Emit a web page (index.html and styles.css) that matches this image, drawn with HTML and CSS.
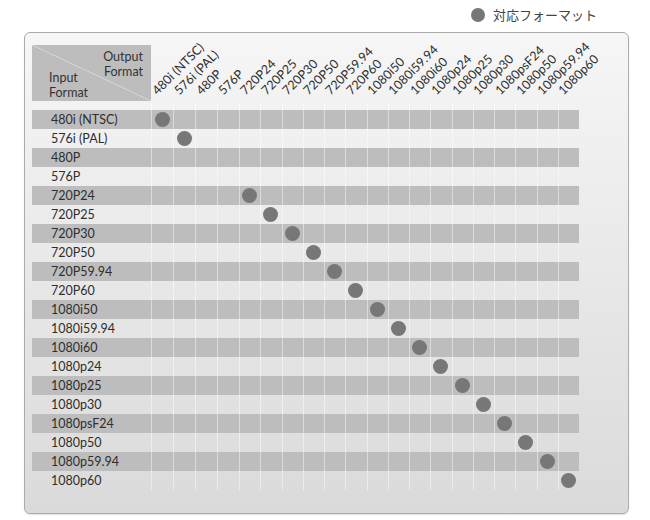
FILE: index.html
```html
<!DOCTYPE html>
<html lang="ja">
<head>
<meta charset="utf-8">
<title>対応フォーマット</title>
<link rel="stylesheet" href="styles.css">
</head>
<body>
<div class="legend"><span class="legend-dot"></span><span class="legend-text">対応フォーマット</span></div>
<div class="panel">
<table class="grid">
<colgroup>
<col class="c-label"><col class="c-wide"><col class="c-wide"><col class="c-wide"><col class="c-wide">
<col class="c-n"><col class="c-n"><col class="c-n"><col class="c-n"><col class="c-n"><col class="c-n"><col class="c-n"><col class="c-n">
<col class="c-n"><col class="c-n"><col class="c-n"><col class="c-n"><col class="c-n"><col class="c-n"><col class="c-n"><col class="c-n">
</colgroup>
<thead>
<tr class="head">
<th class="corner"><div class="corner-out">Output<br>Format</div><div class="corner-in">Input<br>Format</div></th>
<th class="h"><span>480i (NTSC)</span></th>
<th class="h"><span>576i (PAL)</span></th>
<th class="h"><span>480P</span></th>
<th class="h"><span>576P</span></th>
<th class="h"><span>720P24</span></th>
<th class="h"><span>720P25</span></th>
<th class="h"><span>720P30</span></th>
<th class="h"><span>720P50</span></th>
<th class="h"><span>720P59.94</span></th>
<th class="h"><span>720P60</span></th>
<th class="h"><span>1080i50</span></th>
<th class="h"><span>1080i59.94</span></th>
<th class="h"><span>1080i60</span></th>
<th class="h"><span>1080p24</span></th>
<th class="h"><span>1080p25</span></th>
<th class="h"><span>1080p30</span></th>
<th class="h"><span>1080psF24</span></th>
<th class="h"><span>1080p50</span></th>
<th class="h"><span>1080p59.94</span></th>
<th class="h"><span>1080p60</span></th>
</tr>
<tr class="spacer"><td></td><td class="c"></td><td class="c"></td><td class="c"></td><td class="c"></td><td class="c"></td><td class="c"></td><td class="c"></td><td class="c"></td><td class="c"></td><td class="c"></td><td class="c"></td><td class="c"></td><td class="c"></td><td class="c"></td><td class="c"></td><td class="c"></td><td class="c"></td><td class="c"></td><td class="c"></td><td class="c"></td></tr>
</thead>
<tbody>
<tr class="odd"><th class="lbl">480i (NTSC)</th><td class="c"><span class="dot"></span></td><td class="c"></td><td class="c"></td><td class="c"></td><td class="c"></td><td class="c"></td><td class="c"></td><td class="c"></td><td class="c"></td><td class="c"></td><td class="c"></td><td class="c"></td><td class="c"></td><td class="c"></td><td class="c"></td><td class="c"></td><td class="c"></td><td class="c"></td><td class="c"></td><td class="c"></td></tr>
<tr><th class="lbl">576i (PAL)</th><td class="c"></td><td class="c"><span class="dot"></span></td><td class="c"></td><td class="c"></td><td class="c"></td><td class="c"></td><td class="c"></td><td class="c"></td><td class="c"></td><td class="c"></td><td class="c"></td><td class="c"></td><td class="c"></td><td class="c"></td><td class="c"></td><td class="c"></td><td class="c"></td><td class="c"></td><td class="c"></td><td class="c"></td></tr>
<tr class="odd"><th class="lbl">480P</th><td class="c"></td><td class="c"></td><td class="c"></td><td class="c"></td><td class="c"></td><td class="c"></td><td class="c"></td><td class="c"></td><td class="c"></td><td class="c"></td><td class="c"></td><td class="c"></td><td class="c"></td><td class="c"></td><td class="c"></td><td class="c"></td><td class="c"></td><td class="c"></td><td class="c"></td><td class="c"></td></tr>
<tr><th class="lbl">576P</th><td class="c"></td><td class="c"></td><td class="c"></td><td class="c"></td><td class="c"></td><td class="c"></td><td class="c"></td><td class="c"></td><td class="c"></td><td class="c"></td><td class="c"></td><td class="c"></td><td class="c"></td><td class="c"></td><td class="c"></td><td class="c"></td><td class="c"></td><td class="c"></td><td class="c"></td><td class="c"></td></tr>
<tr class="odd"><th class="lbl">720P24</th><td class="c"></td><td class="c"></td><td class="c"></td><td class="c"></td><td class="c"><span class="dot"></span></td><td class="c"></td><td class="c"></td><td class="c"></td><td class="c"></td><td class="c"></td><td class="c"></td><td class="c"></td><td class="c"></td><td class="c"></td><td class="c"></td><td class="c"></td><td class="c"></td><td class="c"></td><td class="c"></td><td class="c"></td></tr>
<tr><th class="lbl">720P25</th><td class="c"></td><td class="c"></td><td class="c"></td><td class="c"></td><td class="c"></td><td class="c"><span class="dot"></span></td><td class="c"></td><td class="c"></td><td class="c"></td><td class="c"></td><td class="c"></td><td class="c"></td><td class="c"></td><td class="c"></td><td class="c"></td><td class="c"></td><td class="c"></td><td class="c"></td><td class="c"></td><td class="c"></td></tr>
<tr class="odd"><th class="lbl">720P30</th><td class="c"></td><td class="c"></td><td class="c"></td><td class="c"></td><td class="c"></td><td class="c"></td><td class="c"><span class="dot"></span></td><td class="c"></td><td class="c"></td><td class="c"></td><td class="c"></td><td class="c"></td><td class="c"></td><td class="c"></td><td class="c"></td><td class="c"></td><td class="c"></td><td class="c"></td><td class="c"></td><td class="c"></td></tr>
<tr><th class="lbl">720P50</th><td class="c"></td><td class="c"></td><td class="c"></td><td class="c"></td><td class="c"></td><td class="c"></td><td class="c"></td><td class="c"><span class="dot"></span></td><td class="c"></td><td class="c"></td><td class="c"></td><td class="c"></td><td class="c"></td><td class="c"></td><td class="c"></td><td class="c"></td><td class="c"></td><td class="c"></td><td class="c"></td><td class="c"></td></tr>
<tr class="odd"><th class="lbl">720P59.94</th><td class="c"></td><td class="c"></td><td class="c"></td><td class="c"></td><td class="c"></td><td class="c"></td><td class="c"></td><td class="c"></td><td class="c"><span class="dot"></span></td><td class="c"></td><td class="c"></td><td class="c"></td><td class="c"></td><td class="c"></td><td class="c"></td><td class="c"></td><td class="c"></td><td class="c"></td><td class="c"></td><td class="c"></td></tr>
<tr><th class="lbl">720P60</th><td class="c"></td><td class="c"></td><td class="c"></td><td class="c"></td><td class="c"></td><td class="c"></td><td class="c"></td><td class="c"></td><td class="c"></td><td class="c"><span class="dot"></span></td><td class="c"></td><td class="c"></td><td class="c"></td><td class="c"></td><td class="c"></td><td class="c"></td><td class="c"></td><td class="c"></td><td class="c"></td><td class="c"></td></tr>
<tr class="odd"><th class="lbl">1080i50</th><td class="c"></td><td class="c"></td><td class="c"></td><td class="c"></td><td class="c"></td><td class="c"></td><td class="c"></td><td class="c"></td><td class="c"></td><td class="c"></td><td class="c"><span class="dot"></span></td><td class="c"></td><td class="c"></td><td class="c"></td><td class="c"></td><td class="c"></td><td class="c"></td><td class="c"></td><td class="c"></td><td class="c"></td></tr>
<tr><th class="lbl">1080i59.94</th><td class="c"></td><td class="c"></td><td class="c"></td><td class="c"></td><td class="c"></td><td class="c"></td><td class="c"></td><td class="c"></td><td class="c"></td><td class="c"></td><td class="c"></td><td class="c"><span class="dot"></span></td><td class="c"></td><td class="c"></td><td class="c"></td><td class="c"></td><td class="c"></td><td class="c"></td><td class="c"></td><td class="c"></td></tr>
<tr class="odd"><th class="lbl">1080i60</th><td class="c"></td><td class="c"></td><td class="c"></td><td class="c"></td><td class="c"></td><td class="c"></td><td class="c"></td><td class="c"></td><td class="c"></td><td class="c"></td><td class="c"></td><td class="c"></td><td class="c"><span class="dot"></span></td><td class="c"></td><td class="c"></td><td class="c"></td><td class="c"></td><td class="c"></td><td class="c"></td><td class="c"></td></tr>
<tr><th class="lbl">1080p24</th><td class="c"></td><td class="c"></td><td class="c"></td><td class="c"></td><td class="c"></td><td class="c"></td><td class="c"></td><td class="c"></td><td class="c"></td><td class="c"></td><td class="c"></td><td class="c"></td><td class="c"></td><td class="c"><span class="dot"></span></td><td class="c"></td><td class="c"></td><td class="c"></td><td class="c"></td><td class="c"></td><td class="c"></td></tr>
<tr class="odd"><th class="lbl">1080p25</th><td class="c"></td><td class="c"></td><td class="c"></td><td class="c"></td><td class="c"></td><td class="c"></td><td class="c"></td><td class="c"></td><td class="c"></td><td class="c"></td><td class="c"></td><td class="c"></td><td class="c"></td><td class="c"></td><td class="c"><span class="dot"></span></td><td class="c"></td><td class="c"></td><td class="c"></td><td class="c"></td><td class="c"></td></tr>
<tr><th class="lbl">1080p30</th><td class="c"></td><td class="c"></td><td class="c"></td><td class="c"></td><td class="c"></td><td class="c"></td><td class="c"></td><td class="c"></td><td class="c"></td><td class="c"></td><td class="c"></td><td class="c"></td><td class="c"></td><td class="c"></td><td class="c"></td><td class="c"><span class="dot"></span></td><td class="c"></td><td class="c"></td><td class="c"></td><td class="c"></td></tr>
<tr class="odd"><th class="lbl">1080psF24</th><td class="c"></td><td class="c"></td><td class="c"></td><td class="c"></td><td class="c"></td><td class="c"></td><td class="c"></td><td class="c"></td><td class="c"></td><td class="c"></td><td class="c"></td><td class="c"></td><td class="c"></td><td class="c"></td><td class="c"></td><td class="c"></td><td class="c"><span class="dot"></span></td><td class="c"></td><td class="c"></td><td class="c"></td></tr>
<tr><th class="lbl">1080p50</th><td class="c"></td><td class="c"></td><td class="c"></td><td class="c"></td><td class="c"></td><td class="c"></td><td class="c"></td><td class="c"></td><td class="c"></td><td class="c"></td><td class="c"></td><td class="c"></td><td class="c"></td><td class="c"></td><td class="c"></td><td class="c"></td><td class="c"></td><td class="c"><span class="dot"></span></td><td class="c"></td><td class="c"></td></tr>
<tr class="odd"><th class="lbl">1080p59.94</th><td class="c"></td><td class="c"></td><td class="c"></td><td class="c"></td><td class="c"></td><td class="c"></td><td class="c"></td><td class="c"></td><td class="c"></td><td class="c"></td><td class="c"></td><td class="c"></td><td class="c"></td><td class="c"></td><td class="c"></td><td class="c"></td><td class="c"></td><td class="c"></td><td class="c"><span class="dot"></span></td><td class="c"></td></tr>
<tr><th class="lbl">1080p60</th><td class="c"></td><td class="c"></td><td class="c"></td><td class="c"></td><td class="c"></td><td class="c"></td><td class="c"></td><td class="c"></td><td class="c"></td><td class="c"></td><td class="c"></td><td class="c"></td><td class="c"></td><td class="c"></td><td class="c"></td><td class="c"></td><td class="c"></td><td class="c"></td><td class="c"></td><td class="c"><span class="dot"></span></td></tr>
</tbody>
</table>
</div>
</body>
</html>
```

FILE: styles.css
```css
html, body {
  margin: 0;
  padding: 0;
  background: #ffffff;
}
body {
  width: 650px;
  height: 520px;
  overflow: hidden;
  font-family: Lato, "Open Sans", "Noto Sans CJK JP", sans-serif;
  color: #333333;
}
.legend {
  height: 30px;
  display: flex;
  align-items: center;
  justify-content: flex-end;
  padding-right: 53px;
}
.legend-dot {
  width: 14px;
  height: 14px;
  border-radius: 50%;
  background: #777777;
  margin-right: 8px;
}
.legend-text {
  font-family: "Noto Sans CJK JP", sans-serif;
  font-size: 13px;
  line-height: 16px;
  color: #444444;
}
.panel {
  box-sizing: border-box;
  margin: 2px 0 0 24px;
  width: 605px;
  height: 482px;
  border: 1px solid #ababab;
  border-radius: 6px;
  background: linear-gradient(#f6f6f6, #dadada);
  box-shadow: 0 1px 1px rgba(0, 0, 0, 0.12);
  padding: 12px 0 0 7px;
}
.grid {
  table-layout: fixed;
  border-collapse: collapse;
  border-spacing: 0;
  width: 547px;
}
.c-label { width: 119px; }
.c-wide { width: 22px; }
.c-n { width: 21.25px; }
.grid th, .grid td {
  padding: 0;
  margin: 0;
}
.head th {
  height: 56px;
}
.corner {
  background: #bdbdbd linear-gradient(to top right, transparent calc(50% - 0.6px), #e2e2e2 50%, transparent calc(50% + 0.6px));
  font-weight: normal;
  font-size: 12.5px;
  line-height: 15px;
  color: #333333;
  vertical-align: top;
  position: relative;
}
.corner-out {
  position: absolute;
  top: 4px;
  right: 8px;
  text-align: right;
}
.corner-in {
  position: absolute;
  bottom: 1px;
  left: 17px;
  text-align: left;
}
.h {
  position: relative;
  font-weight: normal;
}
.h span {
  position: absolute;
  left: calc(50% - 3px);
  bottom: 4px;
  font-size: 12.5px;
  line-height: 12px;
  white-space: nowrap;
  transform-origin: left bottom;
  transform: rotate(-45deg);
  color: #2e2e2e;
}
.spacer td {
  height: 9px;
}
.spacer .c {
  box-shadow: none;
  background: linear-gradient(to right, rgba(255, 255, 255, 0.5) 1px, transparent 1px) 0 3px / 100% 6px no-repeat;
}
tbody tr {
  height: 19px;
}
tbody tr.odd {
  background: #bdbdbd;
}
.lbl {
  text-align: left;
  font-weight: normal;
  font-size: 12.5px;
  line-height: 19px;
  padding-left: 19px !important;
  color: #2e2e2e;
  white-space: nowrap;
}
.c {
  box-shadow: inset 1px 0 0 rgba(255, 255, 255, 0.45);
  height: 19px;
  vertical-align: middle;
}
.dot {
  display: block;
  width: 15px;
  height: 15px;
  margin: 0 auto;
  border-radius: 50%;
  background: #777777;
}
```
